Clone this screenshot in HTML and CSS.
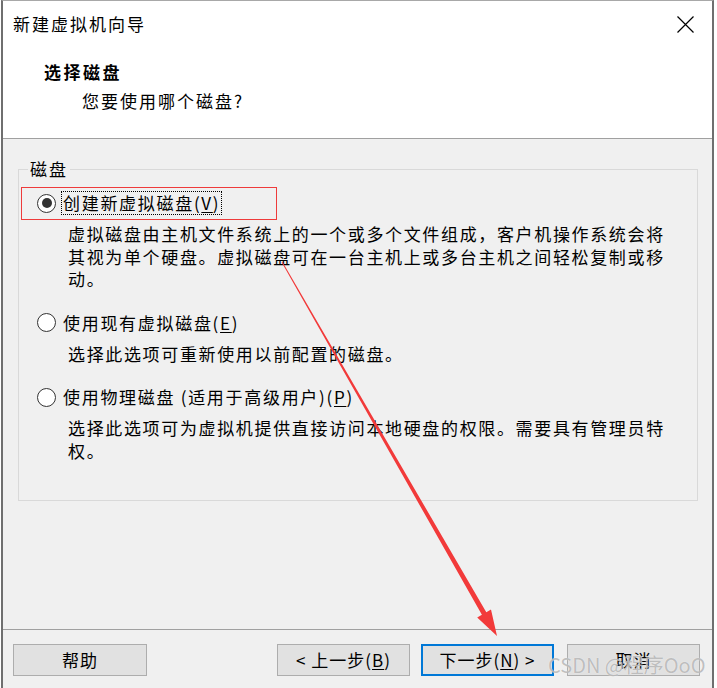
FILE: index.html
```html
<!DOCTYPE html>
<html lang="zh-CN">
<head>
<meta charset="utf-8">
<title>新建虚拟机向导</title>
<link rel="stylesheet" href="styles.css">
</head>
<body>
<div class="window">
  <div class="header">
    <div class="titlebar">
      <span class="title">新建虚拟机向导</span>
      <svg class="close" width="17" height="17" viewBox="0 0 17 17"><path d="M0.5 0.5 L16.5 16.5 M16.5 0.5 L0.5 16.5" stroke="#000" stroke-width="1.2" fill="none"/></svg>
    </div>
    <div class="heading">选择磁盘</div>
    <div class="subheading">您要使用哪个磁盘?</div>
  </div>
  <div class="main">
    <fieldset class="group">
      <legend class="legend">磁盘</legend>
      <div class="option">
        <div class="radio-row"><span class="radio checked"></span><span class="label focus">创建新虚拟磁盘(<u>V</u>)</span></div>
        <div class="desc">
          <div class="line">虚拟磁盘由主机文件系统上的一个或多个文件组成，客户机操作系统会将</div>
          <div class="line">其视为单个硬盘。虚拟磁盘可在一台主机上或多台主机之间轻松复制或移</div>
          <div class="line">动。</div>
        </div>
      </div>
      <div class="option">
        <div class="radio-row"><span class="radio"></span><span class="label">使用现有虚拟磁盘(<u>E</u>)</span></div>
        <div class="desc">
          <div class="line">选择此选项可重新使用以前配置的磁盘。</div>
        </div>
      </div>
      <div class="option">
        <div class="radio-row"><span class="radio"></span><span class="label">使用物理磁盘 (适用于高级用户)(<u>P</u>)</span></div>
        <div class="desc">
          <div class="line">选择此选项可为虚拟机提供直接访问本地硬盘的权限。需要具有管理员特</div>
          <div class="line">权。</div>
        </div>
      </div>
    </fieldset>
  </div>
  <div class="footer">
    <button class="btn btn-help">帮助</button>
    <div class="nav">
      <button class="btn">&lt; 上一步(<u>B</u>)</button>
      <button class="btn btn-default">下一步(<u>N</u>) &gt;</button>
      <button class="btn">取消</button>
    </div>
  </div>
</div>
<div class="annot-rect"></div>
<svg class="arrow" width="717" height="688" viewBox="0 0 717 688">
  <polygon points="281.6,262.2 282.4,261.8 486.3,612.3 491.0,609.5 497,636 477.2,617.5 481.9,614.7" fill="#f23a3a"/>
</svg>
<div class="watermark">CSDN @程序OoO</div>
</body>
</html>
```

FILE: styles.css
```css
html, body {
  margin: 0;
  padding: 0;
}
body {
  background: #fff;
  font-family: "Noto Sans CJK SC", "Microsoft YaHei", sans-serif;
  font-size: 17px;
  color: #000;
  width: 717px;
  height: 688px;
  overflow: hidden;
  position: relative;
}
.window {
  margin-left: 1px;
  width: 709px;
  height: 687px;
  border-left: 2px solid #6f6f6f;
  border-right: 2px solid #6f6f6f;
  border-top: 1px solid #a8a8a8;
  background: #f0f0f0;
  display: flex;
  flex-direction: column;
}
.header {
  background: #fff;
  height: 126px;
  padding: 11px 0 0 10px;
  border-bottom: 1px solid #a0a0a0;
  flex: none;
}
.titlebar {
  display: flex;
  justify-content: space-between;
  align-items: center;
  height: 24px;
  line-height: 24px;
}
.title {
  letter-spacing: 2px;
}
.close {
  margin-right: 18px;
  display: block;
}
.heading {
  margin: 24px 0 0 31px;
  line-height: 24px;
  font-weight: bold;
  letter-spacing: 2.5px;
}
.subheading {
  margin: 5px 0 0 69px;
  line-height: 24px;
  letter-spacing: 2px;
}
.main {
  flex: none;
  height: 490px;
  box-sizing: border-box;
  padding: 0 14px 0 15px;
}
.group {
  margin: 20px 0 0 0;
  padding: 12px 0 0 0;
  border: 1px solid #d9d9d9;
  box-sizing: border-box;
  height: 342px;
  min-width: 0;
}
.legend {
  margin-left: 9px;
  padding: 0 2px;
  line-height: 20px;
  letter-spacing: 2px;
}
.option + .option {
  margin-top: 20px;
}
.radio-row {
  display: flex;
  align-items: center;
  height: 24px;
}
.radio {
  box-sizing: border-box;
  width: 19px;
  height: 19px;
  margin-left: 18px;
  border: 1.5px solid #333;
  border-radius: 50%;
  background: #fff;
  display: flex;
  align-items: center;
  justify-content: center;
  flex: none;
}
.radio.checked::after {
  content: "";
  width: 10px;
  height: 10px;
  border-radius: 50%;
  background: #333;
}
.label {
  margin-left: 5px;
  padding: 0 1px;
  border: 1px dotted transparent;
  line-height: 22px;
  letter-spacing: 1.7px;
  white-space: nowrap;
}
.label.focus {
  border-color: #000;
}
.desc {
  margin: 8px 0 0 49px;
  letter-spacing: 1.65px;
  white-space: nowrap;
}
.line {
  height: 22.5px;
  line-height: 22.5px;
}
.footer {
  flex: 1;
  border-top: 1px solid #a0a0a0;
  padding: 14px 12px 0 10px;
  display: flex;
  justify-content: space-between;
  align-items: flex-start;
}
.nav {
  display: flex;
}
.btn {
  box-sizing: border-box;
  width: 133px;
  height: 32px;
  background: #e1e1e1;
  border: 1px solid #adadad;
  font-family: inherit;
  font-size: 17px;
  color: #000;
  letter-spacing: 1px;
  padding: 0;
  line-height: 28px;
}
.btn-help {
  width: 134px;
}
.btn-default {
  border: 2px solid #0078d7;
  margin: 0 13px 0 11px;
}
.btn u, .label u {
  text-decoration-thickness: 1px;
  text-underline-offset: 2px;
}
.annot-rect {
  position: absolute;
  left: 21px;
  top: 187px;
  width: 254px;
  height: 31px;
  border: 1px solid #ee3b3b;
}
.arrow {
  position: absolute;
  left: 0;
  top: 0;
  pointer-events: none;
}
.watermark {
  position: absolute;
  left: 548px;
  top: 652px;
  font-size: 20px;
  line-height: 26px;
  color: rgba(150, 150, 150, 0.6);
  text-shadow: 0 0 1px rgba(255, 255, 255, 0.9);
  white-space: nowrap;
}
```
